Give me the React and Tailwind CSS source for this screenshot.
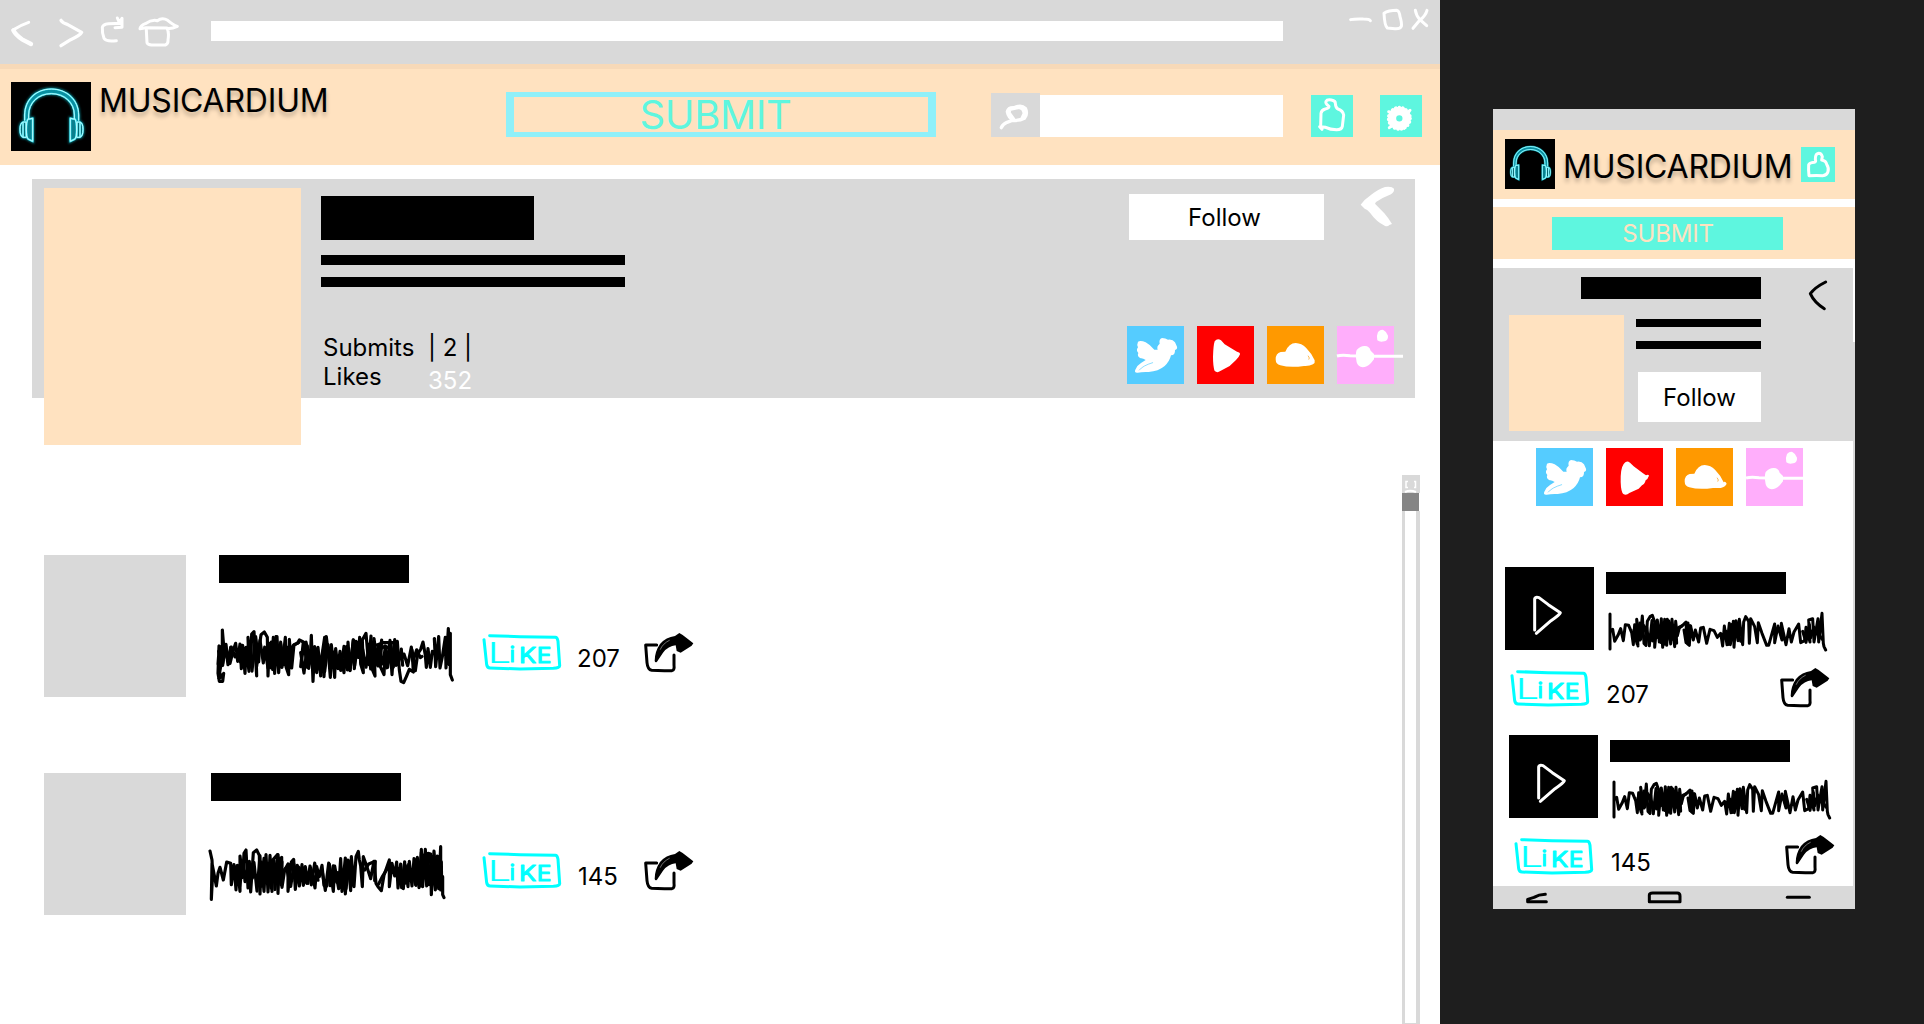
import React from "react";

const ink = { fill: "none", strokeLinecap: "round", strokeLinejoin: "round" };

function Headphones({ viewBox, className }) {
  const shapes = (
    <>
      <path d="M74 362V345C74 300 108 267 154 267S236 300 236 345V362" />
      <path d="M86 357V345C86 308 115 281 154 281S223 308 223 345V357" />
      <path d="M83 358L98 355V424L84 417Q79 412 79 390Q79 365 83 358Z" />
      <path d="M226 358L211 355V424L225 417Q230 412 230 390Q230 365 226 358Z" />
      <path d="M78 366H69Q60 369 60 388Q60 409 69 412H79Z" />
      <path d="M231 366H240Q249 369 249 388Q249 409 240 412H230Z" />
      <path d="M69 367V411M240 367V411" />
    </>
  );
  return (
    <svg viewBox={viewBox} className={className}>
      <g fill="none" stroke="#0bb3c4" strokeWidth="10" opacity="0.6" className="blur-[3px]">{shapes}</g>
      <path d="M80 362V345C80 303 112 274 154 274S229 303 229 345V362" fill="none" stroke="#0a8fa0" strokeWidth="12" />
      <g fill="#0b7f8d" stroke="#35dbe9" strokeWidth="5" strokeLinejoin="round">
        <path d="M83 358L98 355V424L84 417Q79 412 79 390Q79 365 83 358Z" />
        <path d="M226 358L211 355V424L225 417Q230 412 230 390Q230 365 226 358Z" />
      </g>
      <g fill="none" stroke="#35dbe9" strokeWidth="5">{shapes}</g>
      <g fill="none" stroke="#b8fbff" strokeWidth="3">{shapes}</g>
    </svg>
  );
}

function Bird() {
  return (
    <svg viewBox="81 468 171 174" className="h-[58px] w-[57px] bg-[#55ccff]">
      <path fill="#fff" d="M114 515Q122 510 137 517Q150 524 163 539L173 539Q169 529 179 521Q176 508 186 504Q197 505 204 509Q218 507 225 517Q229 526 231 530Q233 537 225 540Q226 556 213 556Q209 574 194 588Q175 604 146 606Q127 605 113 608Q102 609 106 599Q110 587 123 579L137 570Q128 564 122 565Q110 559 115 549Q107 541 114 532Q110 523 114 515Z" />
      <path d="M118 600Q128 587 158 578" stroke="#55ccff" strokeWidth="2" {...ink} />
    </svg>
  );
}

function PlayBadge({ tail }) {
  return (
    <svg viewBox="291 468 171 174" className="h-[58px] w-[57px] bg-[#ff0000]">
      <path
        fill="#fff"
        d={
          tail
            ? "M344 516Q352 503 363 512L374 523L401 543Q409 549 411 550Q418 546 420 551Q416 562 410 565Q407 577 399 580L389 590L361 603Q352 611 343 606Q336 600 335 570Q334 530 344 516Z"
            : "M344 514Q352 503 363 511L374 523L411 545Q421 547 420 553Q417 562 408 570L389 588L361 603Q352 610 344 603Q339 590 339 560Q340 526 344 514Z"
        }
      />
    </svg>
  );
}

function CloudBadge({ tail }) {
  return (
    <svg viewBox="501 468 171 174" className="h-[58px] w-[57px] bg-[#ff9900]">
      <path fill="#fff" d="M527 568Q527 550 542 546L556 545Q567 519 587 519Q605 520 618 533Q636 551 644 571Q646 579 639 583Q628 589 612 588Q570 594 541 586Q527 583 527 568Z" />
      {tail && <path d="M618 582Q640 585 647 575" stroke="#fff" strokeWidth="11" {...ink} />}
      <path d="M625 558Q631 565 627 568" stroke="#ff9900" strokeWidth="2" {...ink} />
    </svg>
  );
}

function NodeBadge({ spill }) {
  return (
    <svg viewBox="711 468 171 174" className={spill ? "h-[58px] w-[57px] overflow-visible bg-[#ffaefb]" : "h-[58px] w-[57px] bg-[#ffaefb]"}>
      <path d="M711 558Q725 554 750 557L800 559L909 559" stroke="#fff" strokeWidth="9" fill="none" />
      <path fill="#fff" d="M770 540Q782 527 795 528Q808 528 812 542L822 552V568L813 579Q800 592 788 592Q774 590 770 577Q765 552 770 540Z" />
      <path fill="#fff" d="M834 486Q842 478 850 480Q859 484 864 497Q865 511 853 514Q840 518 832 511Q829 496 834 486Z" />
    </svg>
  );
}

function Socials({ spill, tail, className }) {
  return (
    <div className={className}>
      <Bird />
      <PlayBadge tail={tail} />
      <CloudBadge tail={tail} />
      <NodeBadge spill={spill} />
    </div>
  );
}

function LikeButton({ className }) {
  return (
    <svg viewBox="846 280 240 114" className={className}>
      <path d="M869 288L960 291L1066 293Q1072 293 1074 305L1079 377Q1080 385 1060 386L960 388L870 385Q862 385 860 375L852 300" stroke="#00ffff" strokeWidth="9" {...ink} />
      <text fill="#00ffff" stroke="#00ffff" strokeLinejoin="round" fontFamily="Inter, sans-serif">
        <tspan x="863" y="370" fontSize="84" strokeWidth="0.5" fontWeight="300" textLength="70" lengthAdjust="spacingAndGlyphs">L</tspan>
        <tspan x="929" y="367" fontSize="62" strokeWidth="3.5">i</tspan>
        <tspan x="957" y="369" fontSize="64" strokeWidth="3" textLength="52" lengthAdjust="spacingAndGlyphs">K</tspan>
        <tspan x="1010" y="370" fontSize="64" strokeWidth="3" textLength="44" lengthAdjust="spacingAndGlyphs">E</tspan>
      </text>
    </svg>
  );
}

function ShareIcon({ className }) {
  return (
    <svg viewBox="1332 279 150 120" className={className}>
      <path d="M1370 315H1337L1341 368Q1343 389 1355 391Q1380 393 1416 392Q1424 390 1422 375L1422 345" stroke="#000" strokeWidth="9" {...ink} />
      <path d="M1364 363Q1364 335 1380 312Q1398 291 1425 288L1438 279L1448 285L1480 310L1475 317L1442 338L1430 333L1427 316Q1405 318 1389 338L1371 365Q1366 369 1364 363Z" fill="#000" />
      <path d="M1381 328Q1388 311 1408 301" stroke="#ddd" strokeWidth="1.5" {...ink} />
    </svg>
  );
}

function zigzag(from, to, step, top, bottom) {
  const points = [];
  for (let x = from, i = 0; x <= to; x += step, i++) {
    const sway = Math.sin(i * 2.3) * 11 + Math.cos(i * 0.9) * 8;
    points.push(`${x + (i % 3) * 2},${(i % 2 ? bottom : top) + sway}`);
  }
  return "M" + points.join(" ");
}

const waveOne =
  "M56,415 67,350 67,270 72,330 57,318 54,400 58,424 68,424 71,400 62,412 54,372 58,320 68,376 76,314 84,374 92,322 90,370 100,330 107,310 113,364 120,312 124,386 128,316 135,400 138,322 147,394 144,292 152,378 155,282 162,275 170,408 167,290 176,366 180,306 183,284 193,276 202,292 204,408 208,310 214,384 220,292 224,400 231,290 236,398 242,306 246,382 256,292 258,380 266,404 268,298 275,384 282,314 292,310 298,300 310,306 302,380 312,310 322,382 318,306 330,366 334,286 339,424 344,320 350,398 354,322 362,408 366,346 374,292 372,410 379,290 386,350 391,412 394,314 404,412 407,326 414,386 420,334 432,398 436,322 442,384 444,306 450,392 460,300 463,386 468,304 474,352 479,292 482,372 490,398 487,300 498,280 506,374 513,288 516,386 525,408 522,306 534,378 545,300 541,380 552,404 556,320 563,382 570,310 576,404 582,312 588,376 592,304 598,390 603,424 611,428 619,410 628,388 640,396 636,330 646,392 653,342 662,328 669,306 676,346 679,382 684,326 691,382 697,334 706,346 703,296 707,380 716,290 720,384 727,350 736,292 738,384 745,266 748,374 751,280 751,404 757,420";
const waveOneFill =
  zigzag(56, 140, 9, 326, 362) + zigzag(146, 270, 8, 306, 380) + zigzag(302, 440, 8, 330, 386) + zigzag(440, 615, 8, 312, 378) + zigzag(612, 670, 9, 334, 364) + "M262,340 280,316 296,308M522,318 550,308 578,308 592,316M534,330 556,318 574,330 566,362";

const waveTwo =
  "M30,273 36,300 38,340 34,418 36,310 49,378 54,340 60,322 70,360 80,306 92,310 94,374 102,314 108,390 112,316 120,394 120,288 128,352 132,280 138,270 144,384 148,304 152,396 160,278 170,270 178,286 180,402 184,306 192,394 198,284 204,396 210,286 216,394 220,298 232,284 234,400 238,298 245,292 246,382 254,330 264,312 264,394 274,306 281,298 286,388 292,316 298,378 306,314 310,376 316,320 324,370 330,318 338,346 345,384 350,320 358,350 366,316 372,376 380,378 388,312 400,394 404,318 416,386 422,296 426,394 436,294 436,402 444,300 452,392 454,290 462,380 468,290 475,274 478,300 482,318 487,380 490,290 500,318 512,356 522,304 528,370 534,380 544,392 552,346 568,300 568,380 576,310 584,348 590,306 594,384 602,312 610,386 616,316 624,380 628,304 636,378 642,296 648,376 652,292 660,378 664,268 668,380 676,268 680,378 684,280 692,282 694,404 700,290 706,390 712,288 716,386 722,260 722,390 728,350 728,404 732,413";
const waveTwoFill =
  zigzag(108, 162, 9, 316, 366) + zigzag(162, 246, 7, 300, 380) + zigzag(262, 350, 8, 326, 366) + zigzag(366, 460, 8, 322, 378) + zigzag(596, 660, 7, 318, 370) + zigzag(650, 726, 5, 290, 370) + "M246,340 258,324 274,312M494,330 506,312 526,304 524,362M536,372 548,348 562,326";

const waveSmall =
  "M390,297 390,192 390,246 398,238 404,274 414,256 422,236 430,272 436,224 446,226 455,248 460,284 464,224 474,288 470,208 480,270 487,198 492,280 498,286 502,214 510,200 517,196 524,216 524,292 532,210 538,276 544,206 548,292 554,208 560,286 566,212 572,282 576,208 584,290 587,214 592,258 598,234 610,224 618,216 621,280 628,286 632,228 640,270 646,240 656,276 662,234 670,232 680,280 690,238 702,242 712,262 722,250 728,288 733,228 741,284 748,220 751,284 760,214 762,292 768,212 774,272 778,208 788,284 791,216 797,200 806,214 808,280 812,206 824,230 832,278 835,218 846,250 860,286 866,286 876,250 884,222 884,278 894,228 906,270 904,220 918,284 927,236 934,276 942,246 956,222 962,278 974,272 978,232 990,276 986,210 998,206 1002,276 1014,206 1016,276 1026,190 1030,280 1032,290 1037,300";
const waveSmallFill =
  zigzag(462, 500, 7, 232, 268) + zigzag(500, 590, 6, 224, 274) + zigzag(612, 632, 4, 232, 264) + zigzag(738, 784, 6, 236, 270) + zigzag(968, 1024, 8, 236, 264) + "M586,248 596,232 606,228";

function Wave({ viewBox, main, extra, width, className }) {
  return (
    <svg viewBox={viewBox} className={className} stroke="#000" strokeWidth={width} {...ink}>
      <path d={main} />
      <path d={extra} />
    </svg>
  );
}

function DesktopTrack({ count, second }) {
  return (
    <article className="flex h-[142px]">
      <div className="w-[142px] bg-[#d9d9d9]" />
      <div className={second ? "ml-[25px] w-[272px]" : "ml-[33px] w-[264px]"}>
        <div className="h-[28px] w-[190px] bg-black" />
        {second ? (
          <Wave viewBox="21 249 726 180" main={waveTwo} extra={waveTwoFill} width="9.5" className="-ml-1 mt-[42px] h-[60px] w-[242px]" />
        ) : (
          <Wave viewBox="45 255 726 180" main={waveOne} extra={waveOneFill} width="9.5" className="-ml-1 mt-[42px] h-[60px] w-[242px]" />
        )}
      </div>
      <LikeButton className="-ml-px mt-[78px] h-[38px] w-[80px]" />
      <span className={second ? "ml-4 mt-[89px] w-[66px] text-2xl leading-[29px]" : "ml-[15px] mt-[89px] w-[67px] text-2xl leading-[29px]"}>{count}</span>
      <ShareIcon className="mt-[78px] h-[40px] w-[50px]" />
    </article>
  );
}

function Desktop() {
  return (
    <section className="flex h-[1024px] w-[1440px] shrink-0 flex-col bg-white">
      <div className="flex h-[64px] items-start bg-[#d9d9d9]">
        <svg viewBox="30 48 75 96" className="ml-[10px] mt-4 h-8 w-[25px]" stroke="#fff" {...ink}>
          <path d="M86 67Q60 76 39 90" strokeWidth="9" />
          <path d="M40 91Q47 105 66 118L93 132" strokeWidth="13" />
        </svg>
        <svg viewBox="174 48 81 96" className="ml-[23px] mt-4 h-8 w-[27px]" stroke="#fff" {...ink}>
          <path d="M183 61Q188 69 202 73L245 97Q240 107 212 119L183 137" strokeWidth="10" />
        </svg>
        <svg viewBox="297 48 81 96" className="ml-[14px] mt-4 h-8 w-[27px]" stroke="#fff" {...ink}>
          <path d="M349 122Q318 126 312 115Q306 98 307 82Q309 73 325 71L366 70M352 54L358 68L366 55L366 82L345 83" strokeWidth="9" />
        </svg>
        <svg viewBox="411 48 129 96" className="ml-[11px] mt-4 h-8 w-[43px]" stroke="#fff" {...ink}>
          <path d="M439 90L441 128Q443 134 455 135L496 135Q505 132 504 120Q508 97 501 84L438 83L420 86Q421 77 436 71Q455 58 472 62Q487 51 503 61Q520 75 532 79Q520 85 502 86" strokeWidth="9" />
        </svg>
        <div className="ml-[31px] mt-[21px] h-5 w-[1072px] bg-white" />
        <svg viewBox="1137 24 69 69" className="ml-[66px] mt-2 h-[23px] w-[23px]" stroke="#fff" {...ink}>
          <path d="M1142 59Q1154 56 1180 57Q1198 57 1201 62" strokeWidth="9" />
        </svg>
        <svg viewBox="1233 24 69 69" className="ml-[9px] mt-2 h-[23px] w-[23px]" stroke="#fff" {...ink}>
          <path d="M1242 40Q1255 31 1281 31Q1288 33 1290 50Q1296 69 1294 79Q1290 87 1275 86L1252 84Q1244 78 1242 40Z" strokeWidth="9" />
        </svg>
        <svg viewBox="1320 24 60 69" className="ml-[6px] mt-2 h-[23px] w-5" stroke="#fff" {...ink}>
          <path d="M1336 31Q1339 48 1349 58L1370 77M1371 31Q1367 47 1349 61L1329 85" strokeWidth="9" />
        </svg>
      </div>

      <header className="flex h-[101px] items-start border-t-[5px] border-[#f7d9b8] bg-[#ffe2c0]">
        <Headphones viewBox="33 246 240 207" className="ml-[11px] mt-[13px] h-[69px] w-[80px] bg-black" />
        <h1 className="ml-[8px] mt-[12px] w-[407px] text-[32px] leading-[39px] tracking-[-0.2px] [text-shadow:0_4px_4px_rgba(0,0,0,0.25)]">MUSICARDIUM</h1>
        <button className="mt-[23px] h-[45px] w-[430px] border-x-8 border-y-[5px] border-[#8ff0f9] pr-[11px] text-[40px] leading-[35px] tracking-[-0.4px] text-[#5ef6df]">SUBMIT</button>
        <svg viewBox="63 279 147 132" className="ml-[55px] mt-[24px] h-[44px] w-[49px] bg-[#d9d9d9]" stroke="#fff" {...ink}>
          <path d="M94 383Q98 373 111 367L130 360Q115 352 112 335Q115 322 132 323Q154 313 166 325Q174 342 163 355Q148 363 128 361" strokeWidth="10" />
          <path d="M117 338L119 328L147 322Q160 324 165 336L157 353M118 340L130 356M158 328Q166 340 160 347" strokeWidth="10" />
        </svg>
        <div className="mt-[26px] h-[42px] w-[243px] bg-white" />
        <svg viewBox="1023 285 126 126" className="ml-[28px] mt-[26px] h-[42px] w-[42px] bg-[#5ef6df]" stroke="#fff" {...ink}>
          <path d="M1049 380L1056 388L1052 378L1053 340Q1054 330 1066 327Q1077 325 1077 319Q1065 310 1068 304Q1071 298 1084 300Q1097 302 1096 310Q1097 324 1104 327Q1119 332 1121 345L1117 379Q1115 389 1100 389Q1080 389 1067 382L1049 380" strokeWidth="9" />
        </svg>
        <svg viewBox="1230 285 126 126" className="ml-[27px] mt-[26px] h-[42px] w-[42px] bg-[#5ef6df]" stroke="#fff" {...ink}>
          <circle cx="1288" cy="355" r="22" strokeWidth="25" />
          <circle cx="1288" cy="355" r="33" strokeWidth="9" strokeDasharray="1 10" />
          <path d="M1258 383L1264 378M1320 331L1314 336M1256 335L1266 338M1302 385L1298 378" strokeWidth="9" />
        </svg>
      </header>

      <div className="ml-8 mt-[14px] flex h-[219px] w-[1383px] shrink-0 items-start bg-[#d9d9d9]">
        <div className="ml-3 mt-[9px] h-[257px] w-[257px] bg-[#ffe2c0]" />
        <div className="ml-5 mt-[17px] w-[304px]">
          <div className="h-11 w-[213px] bg-black" />
          <div className="mt-[15px] h-[10px] bg-black" />
          <div className="mt-3 h-[10px] bg-black" />
          <div className="ml-[2px] mt-[46px] flex text-2xl leading-[29px]">
            <div className="w-[105px]">
              <p>Submits</p>
              <p>Likes</p>
            </div>
            <div>
              <p>| 2 |</p>
              <p className="mt-1 text-white">352</p>
            </div>
          </div>
        </div>
        <div className="ml-[502px] mt-[15px]">
          <div className="ml-[2px] flex items-start">
            <button className="h-[46px] w-[195px] bg-white pr-1 pt-px text-2xl leading-[29px]">Follow</button>
            <svg viewBox="1167 555 111 129" className="ml-[35px] -mt-[9px] h-[43px] w-[37px]">
              <path fill="#fff" d="M1172 614Q1180 601 1198 589Q1222 568 1245 561Q1266 558 1272 566Q1274 575 1263 583Q1242 591 1218 606L1215 611L1243 640Q1256 655 1266 672L1258 675Q1252 681 1244 677Q1219 665 1200 638Q1191 628 1184 626Z" />
            </svg>
          </div>
          <Socials spill className="mt-[86px] flex gap-[13px]" />
        </div>
      </div>

      <div className="flex min-h-0 flex-1">
        <main className="ml-11 mt-[157px] flex w-[1358px] flex-col gap-[76px]">
          <DesktopTrack count="207" />
          <DesktopTrack count="145" second />
        </main>
        <aside className="mt-[77px] flex w-[18px] flex-col">
          <svg viewBox="0 0 18 18" className="h-[18px] w-[18px] bg-[#d9d9d9]" fill="none" stroke="#fff">
            <path d="M6 6.5H4V12.5H6M12 6.5H13.5V12.5H12" strokeWidth="1.5" />
            <path d="M3 17Q8 14.5 14 17" strokeWidth="2" />
          </svg>
          <div className="h-[18px] w-[17px] bg-[#858585]" />
          <div className="flex-1 border-b border-l-[3px] border-r-4 border-[#d9d9d9]" />
        </aside>
      </div>
    </section>
  );
}

function PhoneTrack({ count, className, countClass, shareClass }) {
  return (
    <article className={className}>
      <div className="flex">
        <svg viewBox="75 51 267 249" className="h-[83px] w-[89px] bg-black" stroke="#fff" {...ink}>
          <path d="M164 240L164 147Q166 140 177 143L205 164L241 188Q239 194 213 212L169 250" strokeWidth="9" />
        </svg>
        <div className="ml-3 mt-[5px]">
          <div className="h-[22px] w-[180px] bg-black" />
          <Wave viewBox="378 180 672 129" main={waveSmall} extra={waveSmallFill} width="9" className="mt-4 h-[43px] w-[224px]" />
        </div>
      </div>
      <div className="flex items-start">
        <LikeButton className="ml-[5px] mt-4 h-[38px] w-[80px]" />
        <span className={countClass}>{count}</span>
        <ShareIcon className={shareClass} />
      </div>
    </article>
  );
}

function Phone() {
  return (
    <section className="ml-[53px] mt-[109px] flex h-[800px] w-[362px] shrink-0 flex-col bg-white">
      <div className="h-[21px] bg-[#d9d9d9]" />
      <header className="flex h-[69px] items-start bg-[#ffe2c0]">
        <Headphones viewBox="33 231 238 238" className="ml-3 mt-[9px] h-[50px] w-[50px] bg-black" />
        <h1 className="ml-2 mt-[17px] w-[238px] text-[32px] leading-[39px] tracking-[-0.2px] [text-shadow:0_4px_4px_rgba(0,0,0,0.25)]">MUSICARDIUM</h1>
        <svg viewBox="963 141 102 105" className="mt-[17px] h-[35px] w-[34px] bg-[#5ef6df]" stroke="#fff" {...ink}>
          <path d="M987 227Q985 210 986 195Q988 188 1003 187Q1009 185 1006 178Q1006 161 1016 160Q1024 160 1027 170L1025 180Q1038 182 1040 193Q1047 203 1044 215Q1041 226 1028 227Q1012 226 987 227Z" strokeWidth="9" />
        </svg>
      </header>
      <div className="mt-2 h-[52px] bg-[#ffe2c0] pt-[10px]">
        <button className="ml-[59px] block h-[33px] w-[231px] bg-[#5ef6df] pl-px text-2xl leading-[33px] tracking-[-0.2px] text-[#ffe2c0]">SUBMIT</button>
      </div>
      <div className="mt-[9px] flex h-[618px]">
        <div className="w-[360px]">
          <div className="h-[173px] bg-[#d9d9d9] pt-[9px]">
            <div className="flex h-[38px] items-start">
              <div className="ml-[88px] h-[22px] w-[180px] bg-black" />
              <svg viewBox="981 537 66 99" className="ml-[46px] mt-[2px] h-[33px] w-[22px]" stroke="#000" {...ink}>
                <path d="M1037 546Q1005 562 991 581Q1003 608 1033 626" strokeWidth="9" />
              </svg>
            </div>
            <div className="flex items-start">
              <div className="ml-4 h-[116px] w-[115px] bg-[#ffe2c0]" />
              <div className="ml-3 mt-1 w-[125px]">
                <div className="h-2 bg-black" />
                <div className="mt-[14px] h-2 bg-black" />
                <button className="ml-[2px] mt-[23px] h-[50px] w-[123px] bg-white text-2xl leading-[29px]">Follow</button>
              </div>
            </div>
          </div>
          <Socials tail className="ml-[43px] mt-[7px] flex gap-[13px]" />
          <PhoneTrack count="207" className="ml-3 mt-[61px] h-[168px]" countClass="ml-4 mt-[27px] text-2xl leading-[29px]" shareClass="ml-[131px] mt-[15px] h-[40px] w-[50px]" />
          <PhoneTrack count="145" className="ml-4 h-[151px]" countClass="ml-[17px] mt-[27px] text-2xl leading-[29px]" shareClass="ml-[134px] mt-[14px] h-[40px] w-[50px]" />
        </div>
        <div className="mt-[74px] w-[2px] bg-[#d9d9d9]" />
      </div>
      <nav className="flex h-[23px] items-start bg-[#d9d9d9]">
        <svg viewBox="135 510 72 48" className="ml-8 mt-1 h-4 w-6" stroke="#000" {...ink}>
          <path d="M196 523Q176 524 162 532L143 538V545H199" strokeWidth="9" />
        </svg>
        <svg viewBox="501 510 108 48" className="ml-[98px] mt-1 h-4 w-9" stroke="#000" {...ink}>
          <path d="M508 545V525Q508 519 518 519H592Q600 519 600 528V545Z" strokeWidth="9" />
        </svg>
        <svg viewBox="915 510 78 48" className="ml-[102px] mt-1 h-4 w-[26px]" stroke="#000" {...ink}>
          <path d="M922 532H988" strokeWidth="9" />
        </svg>
      </nav>
    </section>
  );
}

export default function App() {
  return (
    <div className="flex h-[1024px] w-[1924px] items-start overflow-hidden bg-[#1e1e1e] font-['Inter',sans-serif] text-black">
      <Desktop />
      <Phone />
    </div>
  );
}
